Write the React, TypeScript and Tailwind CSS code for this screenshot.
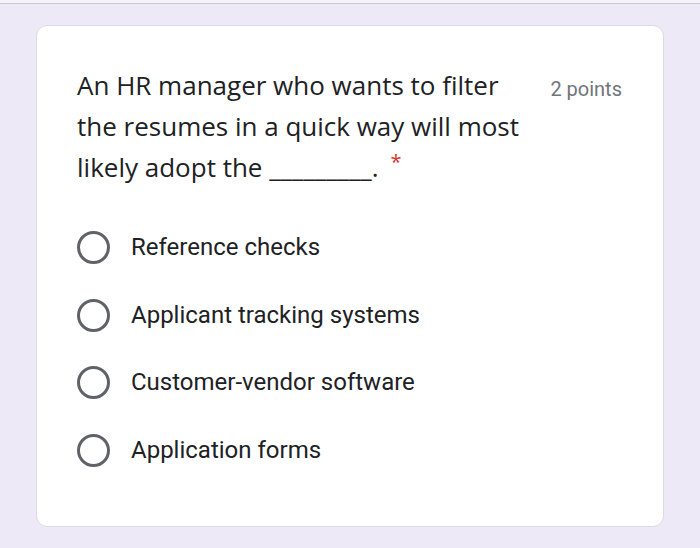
import React from "react";

const options = [
  "Reference checks",
  "Applicant tracking systems",
  "Customer-vendor software",
  "Application forms",
];

export default function App() {
  return (
    <div className="w-[700px] h-[548px] bg-[#ede9f7] overflow-hidden">
      <div className="h-[3px] bg-[#f4f3f8]" />
      <div className="h-px bg-[#c9c7d0]" />
      <div className="px-[36px] pt-[21px]">
        <div className="h-[502px] bg-white rounded-[11px] border border-[#dcdae2] pl-[40px] pr-[41px] pt-[45px]">
          <div className="flex items-start justify-between">
            <p
              className="w-[455px] text-[26px] leading-[41px] text-[#202124] -mt-[6px]"
              style={{ fontFamily: '"Open Sans", "Noto Sans", sans-serif' }}
            >
              An HR manager who wants to filter the resumes in a quick way will most likely adopt the _________.
              <span className="ml-[12px] align-top text-[20px] leading-[30px] text-[#d93025]">*</span>
            </p>
            <span
              className="text-[20px] text-[#70757a] mt-[3px]"
              style={{ fontFamily: 'Roboto, "Liberation Sans", sans-serif' }}
            >
              2 points
            </span>
          </div>
          <div className="mt-[43px] flex flex-col gap-[34.5px]">
            {options.map((o) => (
              <div key={o} className="flex items-center gap-[21px]">
                <div className="size-[33px] rounded-full border-[3px] border-[#5f6368]" />
                <span
                  className="text-[24px] leading-[33px] text-[#202124]"
                  style={{ fontFamily: 'Roboto, "Liberation Sans", sans-serif' }}
                >
                  {o}
                </span>
              </div>
            ))}
          </div>
        </div>
      </div>
    </div>
  );
}
